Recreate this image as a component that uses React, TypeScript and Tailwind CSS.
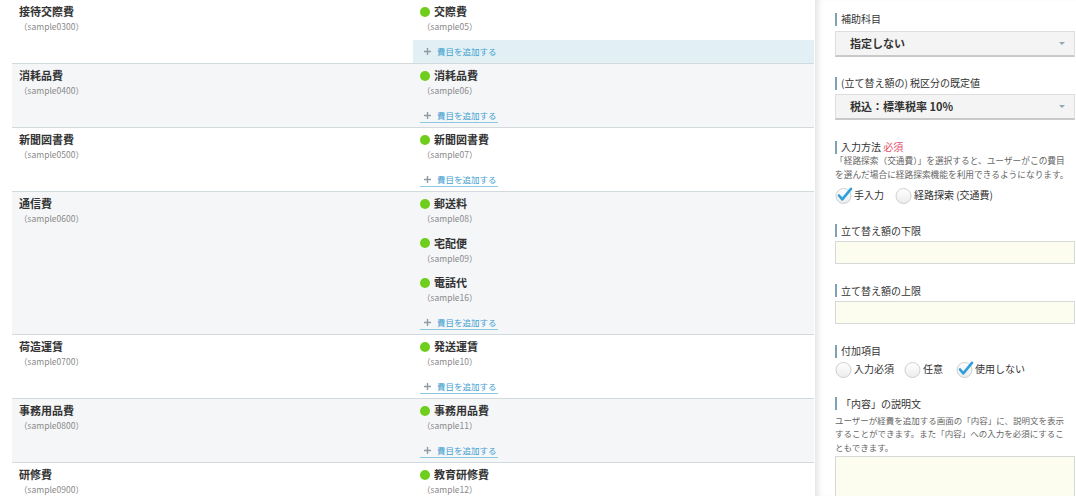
import React from "react";

type Row = { name: string; code: string; items: [string, string][]; hover?: boolean };

const rows: Row[] = [
  { name: "接待交際費", code: "sample0300", items: [["交際費", "sample05"]], hover: true },
  { name: "消耗品費", code: "sample0400", items: [["消耗品費", "sample06"]] },
  { name: "新聞図書費", code: "sample0500", items: [["新聞図書費", "sample07"]] },
  {
    name: "通信費",
    code: "sample0600",
    items: [
      ["郵送料", "sample08"],
      ["宅配便", "sample09"],
      ["電話代", "sample16"],
    ],
  },
  { name: "荷造運賃", code: "sample0700", items: [["発送運賃", "sample10"]] },
  { name: "事務用品費", code: "sample0800", items: [["事務用品費", "sample11"]] },
  { name: "研修費", code: "sample0900", items: [["教育研修費", "sample12"]] },
];

function Plus() {
  return (
    <svg width="7" height="7" viewBox="0 0 7 7" className="ml-[4px] mr-[6px] shrink-0">
      <path d="M3.5 0 V7 M0 3.5 H7" stroke="#8e9ba4" strokeWidth="1.4" />
    </svg>
  );
}

function ListRow({ row, index }: { row: Row; index: number }) {
  const n = row.items.length;
  return (
    <div className={`flex border-b border-[#d3dadd] ${index % 2 === 1 ? "bg-[#f5f6f8]" : "bg-white"}`}>
      <div className="w-[401px] pl-[7px] pt-[4px]">
        <div className="text-[11px] leading-[15px] font-bold text-[#333]">{row.name}</div>
        <div className="text-[8.5px] leading-[14px] text-[#8a8a8a]">（{row.code}）</div>
      </div>
      <div className="w-[401px] pt-[4px]">
        {row.items.map((it, j) => (
          <div key={j} className={`pl-[7px] ${j < n - 1 ? "mb-[10.5px]" : ""}`}>
            <div className="flex items-center h-[15px]">
              <span className="w-[10px] h-[10px] rounded-full bg-[#6fce1c] mr-[4px] shrink-0" />
              <span className="text-[11px] leading-[15px] font-bold text-[#333]">{it[0]}</span>
            </div>
            <div className="pl-[2px] text-[8.5px] leading-[14px] text-[#8a8a8a]">（{it[1]}）</div>
          </div>
        ))}
        <div className={`mt-[7px] h-[23px] pl-[7px] pt-[5px] flex items-start ${row.hover ? "bg-[#e2f0f6]" : ""}`}>
          <div
            className={`flex items-center h-[14px] border-b ${
              row.hover ? "border-transparent" : "border-[#8cc8e0]"
            }`}
          >
            <Plus />
            <span className="text-[8.5px] leading-[13px] text-[#3fa0d0] pr-[1px]">費目を追加する</span>
          </div>
        </div>
      </div>
    </div>
  );
}

function Label({ children, className = "" }: { children: React.ReactNode; className?: string }) {
  return (
    <div className={`flex items-center h-[14px] ${className}`}>
      <span className="w-[2px] h-[13px] bg-[#7fa3b3] mr-[4px] shrink-0" />
      <span className="text-[10px] leading-[14px] text-[#333] whitespace-nowrap">{children}</span>
    </div>
  );
}

function Select({ children, className = "" }: { children: React.ReactNode; className?: string }) {
  return (
    <div
      className={`flex items-center justify-between h-[26px] bg-[#f4f4f4] border border-[#dedede] border-b-2 border-b-[#c9c9c9] pl-[14px] pr-[9px] ${className}`}
    >
      <span className="text-[11px] font-bold text-[#333]">{children}</span>
      <svg width="6" height="3" viewBox="0 0 6 3">
        <path d="M0 0 H6 L3 3 Z" fill="#8ea8b6" />
      </svg>
    </div>
  );
}

function Radio({ checked, label, className = "" }: { checked?: boolean; label: string; className?: string }) {
  return (
    <div className={`flex items-center ${className}`}>
      <svg width="18" height="18" viewBox="0 0 18 18" className="shrink-0">
        <defs>
          <linearGradient id="rg" x1="0" y1="0" x2="0" y2="1">
            <stop offset="0" stopColor="#ffffff" />
            <stop offset="1" stopColor="#ececec" />
          </linearGradient>
        </defs>
        <circle cx="8.5" cy="10" r="7.5" fill="url(#rg)" stroke="#cfcfcf" strokeWidth="1" />
        {checked && (
          <path
            d="M4 9.5 L7.3 13.3 L16 2.8"
            stroke="#2f9fdc"
            strokeWidth="2.6"
            fill="none"
            strokeLinecap="round"
            strokeLinejoin="round"
          />
        )}
      </svg>
      <span className="ml-[1px] text-[10px] leading-[17px] text-[#333] whitespace-nowrap">{label}</span>
    </div>
  );
}

export default function App() {
  return (
    <div className="flex h-[496px] w-[1076px] overflow-hidden bg-white font-['Noto_Sans_CJK_JP','Noto_Sans',sans-serif]">
      <div className="w-[815px] shrink-0 pl-[12px] pr-[1px]">
        {rows.map((r, i) => (
          <ListRow key={i} row={r} index={i} />
        ))}
      </div>
      <div className="flex-1 bg-white pl-[20px] pr-[1px] pt-[12px] shadow-[inset_7px_0_7px_-5px_rgba(0,0,0,0.14)]">
        <Label>補助科目</Label>
        <Select className="mt-[5px]">指定しない</Select>
        <Label className="mt-[19px]">(立て替え額の) 税区分の既定値</Label>
        <Select className="mt-[4px]">税込：標準税率 10%</Select>
        <Label className="mt-[20px]">
          入力方法 <span className="text-[#e0506a]">必須</span>
        </Label>
        <div className="text-[8.7px] leading-[13.5px] text-[#666]">
          <div className="whitespace-nowrap">「経路探索（交通費）」を選択すると、ユーザーがこの費目</div>
          <div className="whitespace-nowrap">を選んだ場合に経路探索機能を利用できるようになります。</div>
        </div>
        <div className="mt-[4.5px] flex items-center h-[18px]">
          <Radio checked label="手入力" />
          <Radio label="経路探索 (交通費)" className="ml-[11px]" />
        </div>
        <Label className="mt-[20px]">立て替え額の下限</Label>
        <div className="mt-[3px] h-[23px] bg-[#fcfcef] border border-[#d6dad6]" />
        <Label className="mt-[20px]">立て替え額の上限</Label>
        <div className="mt-[3.5px] h-[23px] bg-[#fcfcef] border border-[#d6dad6]" />
        <Label className="mt-[20px]">付加項目</Label>
        <div className="mt-[1.5px] flex items-center h-[18px]">
          <Radio label="入力必須" />
          <Radio label="任意" className="ml-[10px]" />
          <Radio checked label="使用しない" className="ml-[13px]" />
        </div>
        <Label className="mt-[19px]">「内容」の説明文</Label>
        <div className="mt-[3px] text-[8.5px] leading-[13.6px] text-[#666]">
          <div className="whitespace-nowrap">ユーザーが経費を追加する画面の「内容」に、説明文を表示</div>
          <div className="whitespace-nowrap">することができます。また「内容」への入力を必須にするこ</div>
          <div className="whitespace-nowrap">ともできます。</div>
        </div>
        <div className="mt-[2px] h-[70px] bg-[#fcfcef] border border-[#d6dad6]" />
      </div>
    </div>
  );
}
